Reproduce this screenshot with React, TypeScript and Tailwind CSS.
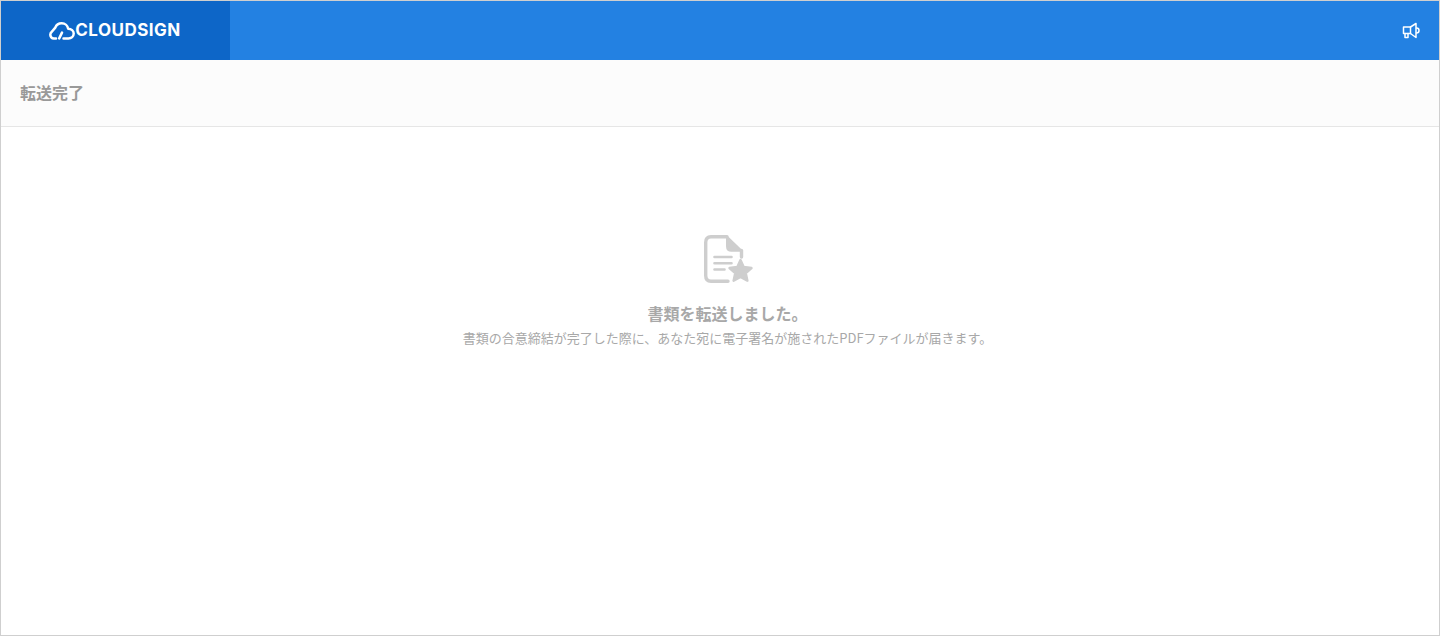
export default function App() {
  return (
    <div className="h-[636px] w-[1440px] overflow-hidden border border-[#cfcfcf] bg-white font-['Noto_Sans_CJK_JP',sans-serif]">
      <header className="flex h-[59px] items-center justify-between bg-[#2381e2]">
        <div className="flex h-full w-[229px] items-center justify-center gap-[0px] bg-[#0d66c8] pr-[1px]">
          <svg width="26" height="18" viewBox="0 0 26 18" fill="none" stroke="#fff" strokeWidth="2.500" strokeLinecap="round" strokeLinejoin="round">
            <path d="M7 16.400H4.800C2.600 16.400 1.300 14.700 1.300 12.800c0-1.300.6-2.300 1.500-3L6.300 5.600C7.300 3 9.700 1.300 12.700 1.300c3.400 0 6 2.400 6.400 5.400 3.200.1 5.600 2.300 5.600 4.900 0 2.700-2.400 4.800-5.200 4.800h-5" />
            <path d="M10.200 16.400l2.800-5.800" />
          </svg>
          <span className="font-['Inter',sans-serif] text-[17px] leading-none font-bold tracking-[0.5px] text-white">CLOUDSIGN</span>
        </div>
        <svg className="mr-[19px]" width="18" height="17" viewBox="0 0 18 17" fill="none" stroke="#fff" strokeWidth="1.500" strokeLinejoin="round" strokeLinecap="round">
          <path d="M1.500 5h7v6.500h-7z" />
          <path d="M8.500 5L14 1.500v14l-5.500-4" />
          <path d="M14.500 6c2 0 2.500 1 2.500 2.500S16.500 11 14.500 11" />
          <path d="M3 11.500V15.500h3v-4" />
        </svg>
      </header>
      <div className="flex h-[67px] items-center border-b border-[#e6e6e6] bg-[#fcfcfc] px-[19px] pb-[2px]">
        <h1 className="text-[16px] font-bold text-[#999]">転送完了</h1>
      </div>
      <main className="flex flex-col items-center pt-[108px] pl-[15px]">
        <svg width="50" height="48" viewBox="0 0 50 48" fill="none">
          <path d="M24 1.700H8C4.500 1.700 2.700 4 2.700 7.500v33c0 3.500 1.800 5.800 5.300 5.800h17" stroke="#cecece" strokeWidth="3.400" strokeLinecap="round" />
          <path d="M24 1.700l14.500 14H28.500c-3 0-4.500-1.500-4.500-4.500z" fill="#cecece" stroke="#cecece" strokeWidth="2" strokeLinejoin="round" />
          <path d="M38.500 15.500V22" stroke="#cecece" strokeWidth="3.400" strokeLinecap="round" />
          <path d="M11.500 22h17M11.500 28.200h17M11.500 34.500h10" stroke="#cecece" strokeWidth="2.600" strokeLinecap="round" />
          <path d="M37.500 25l3.200 7 7.800 1-5.700 5.200 1.600 7.500-6.900-3.800-6.900 3.800 1.600-7.500-5.700-5.200 7.800-1z" fill="#cecece" stroke="#cecece" strokeWidth="2.400" strokeLinejoin="round" />
        </svg>
        <p className="mt-[17px] text-[16px] leading-[26px] font-bold text-[#a8a8a8]">書類を転送しました。</p>
        <p className="mt-[2px] text-[13px] leading-[20px] text-[#a8a8a8]">書類の合意締結が完了した際に、あなた宛に電子署名が施されたPDFファイルが届きます。</p>
      </main>
    </div>
  );
}
